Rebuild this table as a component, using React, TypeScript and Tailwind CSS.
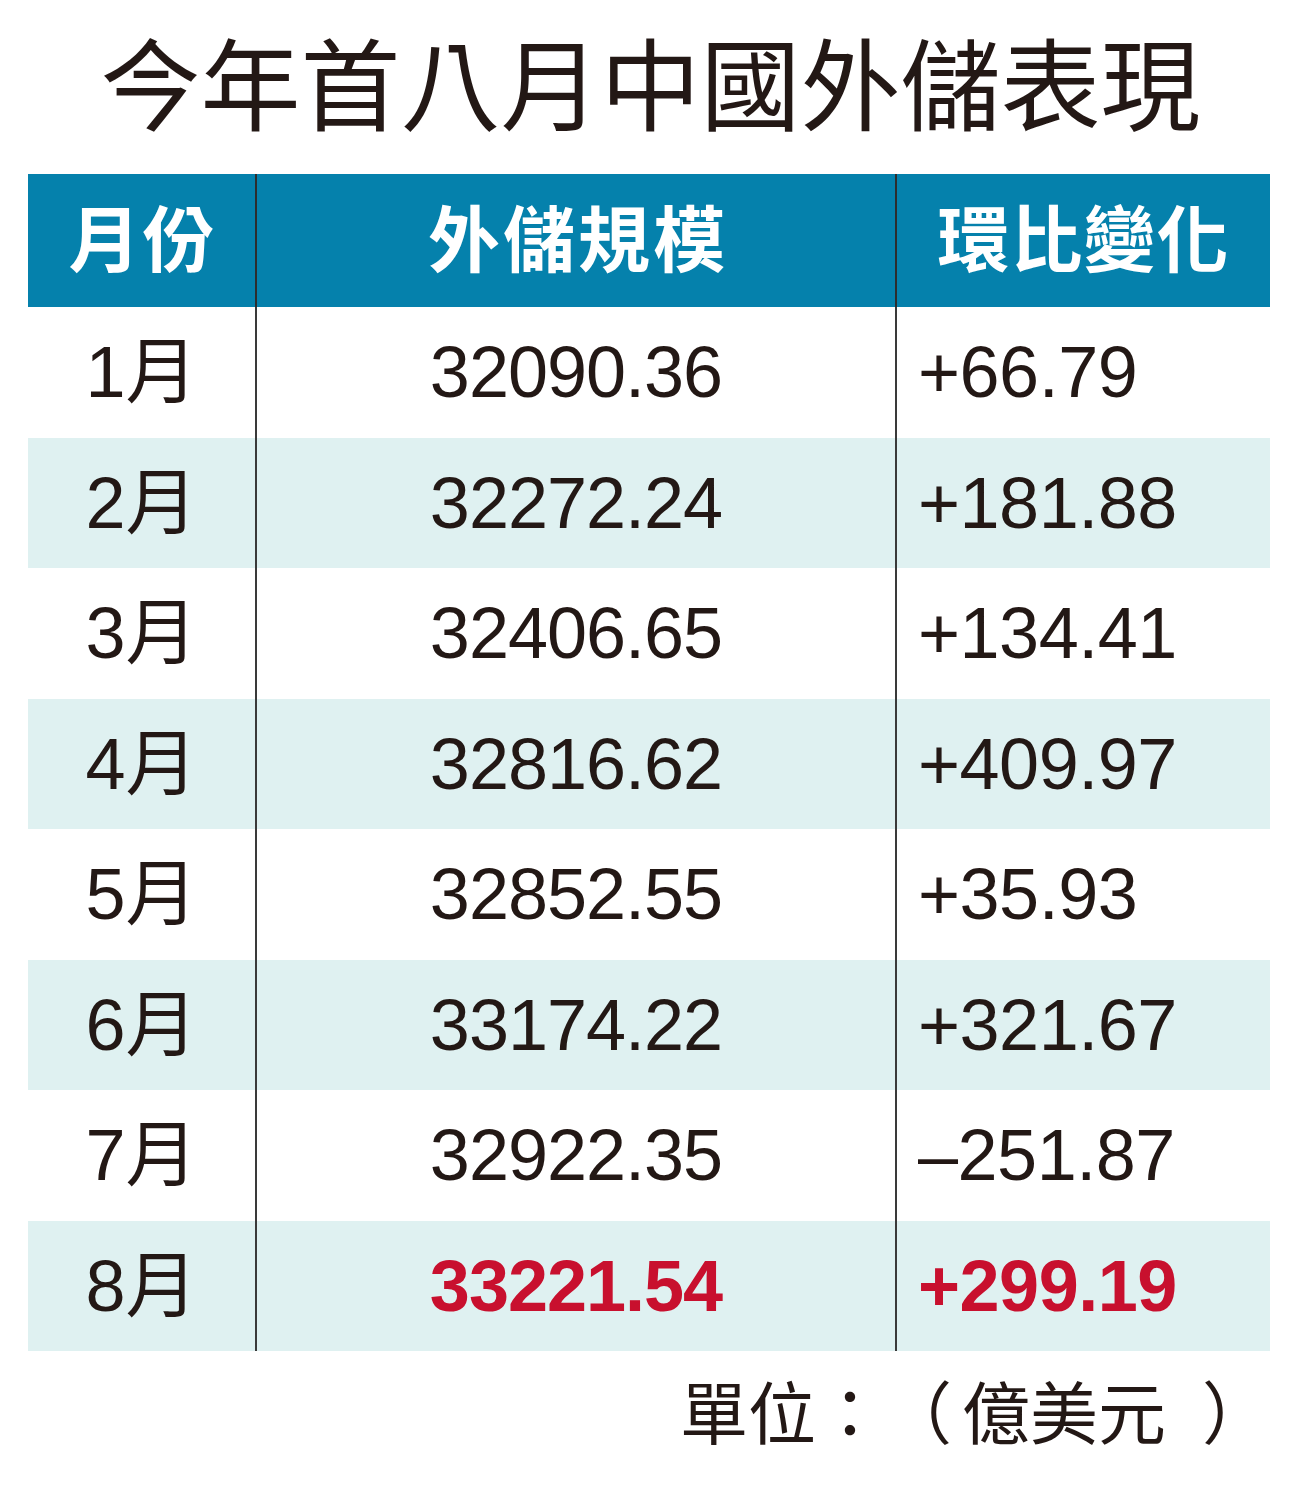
const rows = [
  { m: "1月", v: "32090.36", d: "+66.79" },
  { m: "2月", v: "32272.24", d: "+181.88" },
  { m: "3月", v: "32406.65", d: "+134.41" },
  { m: "4月", v: "32816.62", d: "+409.97" },
  { m: "5月", v: "32852.55", d: "+35.93" },
  { m: "6月", v: "33174.22", d: "+321.67" },
  { m: "7月", v: "32922.35", d: "–251.87" },
  { m: "8月", v: "33221.54", d: "+299.19", hot: true },
]

const font = { fontFamily: '"Liberation Sans", "Noto Sans CJK TC", sans-serif' }

export default function App() {
  return (
    <div className="w-[1311px] h-[1500px] bg-white text-[#231815]" style={font}>
      <h1 className="h-[174px] pt-[38px] pr-[10px] text-center text-[100px] leading-none font-normal">
        今年首八月中國外儲表現
      </h1>

      <div className="ml-[28px] w-[1242px]">
        <div className="grid grid-cols-[229px_640px_373px] h-[133px] bg-[#0581ac] text-white font-bold text-[72px] leading-none">
          <div className="flex items-center justify-center border-r-2 border-[#2d2d2d] tracking-[2px] pl-[2px]">月份</div>
          <div className="flex items-center justify-center border-r-2 border-[#2d2d2d] tracking-[3px] pl-[4px]">外儲規模</div>
          <div className="flex items-center justify-center tracking-[1px]">環比變化</div>
        </div>

        {rows.map((r, i) => (
          <div
            key={r.m}
            className={`grid grid-cols-[229px_640px_373px] h-[130.5px] text-[72px] leading-none ${
              i % 2 === 1 ? "bg-[#dff1f1]" : "bg-white"
            }`}
          >
            <div className="flex items-center justify-center border-r-2 border-[#3a3a3a]">{r.m}</div>
            <div
              className={`flex items-center justify-center border-r-2 border-[#3a3a3a] tracking-[-1px] ${
                r.hot ? "text-[#c8102e] font-bold" : ""
              }`}
            >
              {r.v}
            </div>
            <div className={`flex items-center pl-[21px] tracking-[-0.5px] ${r.hot ? "text-[#c8102e] font-bold" : ""}`}>
              {r.d}
            </div>
          </div>
        ))}

        <div className="flex pt-[30px] pl-[652px] text-[68px] leading-none whitespace-nowrap [text-spacing-trim:space-all]">
          <span className="shrink-0">單位：</span>
          <span className="shrink-0">（</span>
          <span className="shrink-0 ml-[10px]">億美元</span>
          <span className="shrink-0 ml-[36px]">）</span>
        </div>
      </div>
    </div>
  )
}
